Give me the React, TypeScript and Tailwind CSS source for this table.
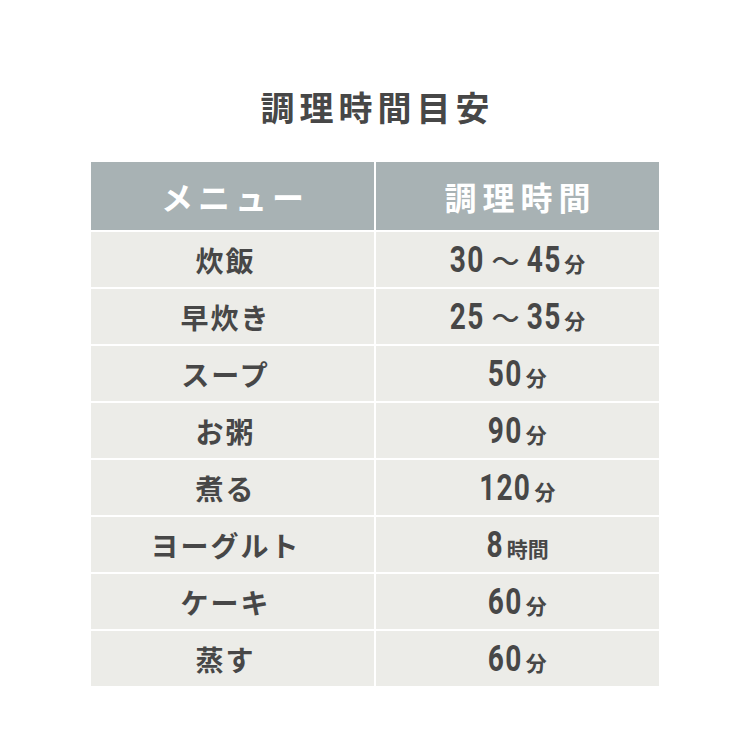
import React from "react";

const jp = { fontFamily: '"Noto Sans CJK JP", "Noto Sans", sans-serif' };

const rows: [string, React.ReactNode][] = [
  ["炊飯", <Num parts={["30", "～", "45"]} unit="分" />],
  ["早炊き", <Num parts={["25", "～", "35"]} unit="分" />],
  ["スープ", <Num parts={["50"]} unit="分" />],
  ["お粥", <Num parts={["90"]} unit="分" />],
  ["煮る", <Num parts={["120"]} unit="分" />],
  ["ヨーグルト", <Num parts={["8"]} unit="時間" />],
  ["ケーキ", <Num parts={["60"]} unit="分" />],
  ["蒸す", <Num parts={["60"]} unit="分" />],
];

function Num({ parts, unit }: { parts: string[]; unit: string }) {
  return (
    <span className="flex items-baseline justify-center">
      {parts.map((p, i) =>
        p === "～" ? (
          <span key={i} className="mx-[7px] text-[28px] font-medium" style={jp}>
            ～
          </span>
        ) : (
          <span
            key={i}
            className="inline-block text-[36px] font-bold leading-none tracking-[1.5px] scale-x-[0.78]"
            style={{ fontFamily: "Roboto, sans-serif", margin: `0 -${p.length * 2.4}px` }}
          >
            {p}
          </span>
        )
      )}
      <span className="ml-[3px] text-[21px] font-bold leading-none" style={jp}>
        {unit}
      </span>
    </span>
  );
}

export default function App() {
  return (
    <div className="w-[750px] h-[750px] bg-white flex flex-col items-center" style={jp}>
      <h1 className="mt-[85px] text-[34px] font-bold tracking-[5px] text-[#474747] leading-[44px] pl-[5px]">
        調理時間目安
      </h1>
      <div className="mt-[33px] w-[568px] grid grid-cols-2 gap-[2px] bg-white text-[#474747]">
        <div className="h-[68px] bg-[#a8b2b4] flex items-center justify-center text-white text-[32px] font-bold tracking-[5px] pl-[5px]">
          メニュー
        </div>
        <div className="h-[68px] bg-[#a8b2b4] flex items-center justify-center text-white text-[32px] font-bold tracking-[6px] pl-[6px]">
          調理時間
        </div>
        {rows.map(([m, t], i) => (
          <React.Fragment key={i}>
            <div className="h-[55px] bg-[#ecece8] flex items-center justify-center text-[28px] font-bold tracking-[2px] pr-[14px]">
              {m}
            </div>
            <div className="h-[55px] bg-[#ecece8] flex items-center justify-center">{t}</div>
          </React.Fragment>
        ))}
      </div>
    </div>
  );
}
